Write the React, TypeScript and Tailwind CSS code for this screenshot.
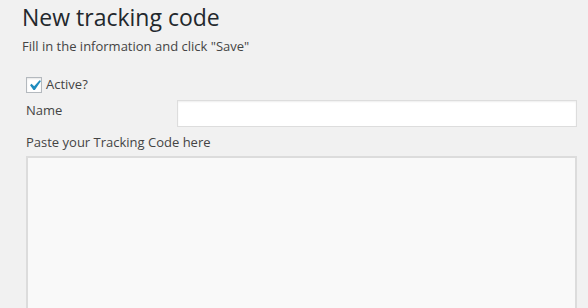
export default function App() {
  return (
    <div className="min-h-[308px] bg-[#f1f1f1] font-['Open_Sans',sans-serif] text-[#444] pl-[22px] pt-[3px] overflow-hidden h-[308px]">
      <h1 className="text-[23px] leading-[29px] text-[#23282d]">New tracking code</h1>
      <p className="text-[13px] leading-[18px] mt-[5px]">Fill in the information and click "Save"</p>

      <div className="pl-[4px] pr-[11px] mt-[22px]">
        <label className="flex items-center gap-[4px] text-[13px] h-[16px]">
          <span className="w-[16px] h-[16px] border border-[#b4b9be] bg-white flex items-center justify-center shadow-[inset_0_1px_2px_rgba(0,0,0,0.1)] overflow-visible">
            <svg viewBox="0 0 20 20" className="w-[21px] h-[21px] shrink-0 -mx-[3px] text-[#1e8cbe]" fill="currentColor">
              <path d="M14.83 4.89l1.34.94-5.81 8.38H9.02L5.78 9.67l1.34-1.25 2.57 2.4z" />
            </svg>
          </span>
          Active?
        </label>

        <div className="flex items-start mt-[7px]">
          <span className="text-[13px] leading-[18px] w-[151px] pt-[1px]">Name</span>
          <input
            type="text"
            className="flex-1 h-[27px] bg-white border border-[#ddd] shadow-[inset_0_1px_2px_rgba(0,0,0,0.07)] outline-none"
          />
        </div>

        <p className="text-[13px] leading-[18px] mt-[6px]">Paste your Tracking Code here</p>
        <textarea className="block mt-[5px] w-[551px] h-[200px] bg-[#f9f9f9] border-2 border-[#dcdcdc] resize-none outline-none" />
      </div>
    </div>
  )
}
